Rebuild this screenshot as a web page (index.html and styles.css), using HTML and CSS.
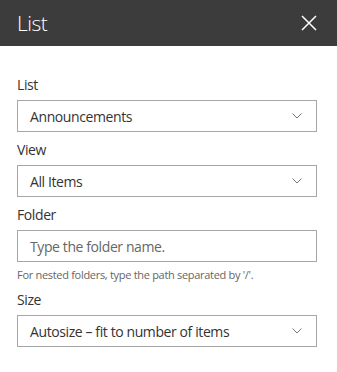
FILE: index.html
```html
<!DOCTYPE html>
<html lang="en">
<head>
    <meta charset="UTF-8">
    <title>List</title>
    <link rel="stylesheet" href="styles.css">
</head>
<body>
    <div class="panel">
        <div class="panelHeader">
            <span class="panelTitle">List</span>
            <button type="button" class="closeBtn" aria-label="Close">
                <svg width="16" height="16" viewBox="0 0 16 16"><path d="M1 1L15 15M15 1L1 15" stroke="#fff" stroke-width="1.5" fill="none"/></svg>
            </button>
        </div>
        <div class="panelBody">
            <div class="field">
                <label class="fieldLabel">List</label>
                <div class="dropdown">
                    <span class="dropdownText">Announcements</span>
                    <svg class="chevron" width="10" height="6" viewBox="0 0 10 6"><path d="M0.5 0.5L5 5L9.5 0.5" stroke="#777" stroke-width="1" fill="none"/></svg>
                </div>
            </div>
            <div class="field">
                <label class="fieldLabel">View</label>
                <div class="dropdown">
                    <span class="dropdownText">All Items</span>
                    <svg class="chevron" width="10" height="6" viewBox="0 0 10 6"><path d="M0.5 0.5L5 5L9.5 0.5" stroke="#777" stroke-width="1" fill="none"/></svg>
                </div>
            </div>
            <div class="field">
                <label class="fieldLabel">Folder</label>
                <input class="textInput" type="text" placeholder="Type the folder name.">
                <p class="fieldHint">For nested folders, type the path separated by '/'.</p>
            </div>
            <div class="field">
                <label class="fieldLabel">Size</label>
                <div class="dropdown">
                    <span class="dropdownText">Autosize – fit to number of items</span>
                    <svg class="chevron" width="10" height="6" viewBox="0 0 10 6"><path d="M0.5 0.5L5 5L9.5 0.5" stroke="#777" stroke-width="1" fill="none"/></svg>
                </div>
            </div>
        </div>
    </div>
</body>
</html>
```
FILE: styles.css
```css
body{
    margin: 0;
    background-color: #fff;
    font-family: "Segoe UI", "Open Sans", sans-serif;
    color: #333;
}
.panelHeader{
    height: 46px;
    background-color: #3c3c3c;
    display: flex;
    align-items: center;
    justify-content: space-between;
    padding-left: 17px;
    padding-right: 20px;
}
.panelTitle{
    color: #fff;
    font-size: 21px;
    font-weight: 300;
    line-height: 28px;
    letter-spacing: -0.5px;
}
.closeBtn{
    border: none;
    background: none;
    padding: 0;
    width: 16px;
    height: 16px;
    display: flex;
}
.panelBody{
    padding-top: 24px;
    padding-left: 17px;
}
.field{
    width: 300px;
    margin-bottom: 3px;
}
.fieldLabel{
    display: block;
    font-size: 14px;
    line-height: 20px;
    padding: 5px 0;
    color: #333;
    letter-spacing: -0.4px;
}
.dropdown{
    box-sizing: border-box;
    height: 32px;
    border: 1px solid #a6a6a6;
    display: flex;
    align-items: center;
    justify-content: space-between;
    padding-left: 12px;
    padding-right: 14px;
}
.dropdownText{
    font-size: 14px;
    color: #333;
    letter-spacing: -0.4px;
}
.chevron{
    display: block;
}
.textInput{
    box-sizing: border-box;
    width: 300px;
    height: 32px;
    border: 1px solid #a6a6a6;
    padding: 0 12px;
    font-family: "Segoe UI", "Open Sans", sans-serif;
    font-size: 14px;
    letter-spacing: -0.4px;
    color: #333;
    outline: none;
    display: block;
}
.textInput::placeholder{
    color: #666;
}
.fieldHint{
    margin: 0;
    padding-top: 5px;
    font-size: 11px;
    line-height: 15px;
    letter-spacing: -0.3px;
    color: #666;
}
```
